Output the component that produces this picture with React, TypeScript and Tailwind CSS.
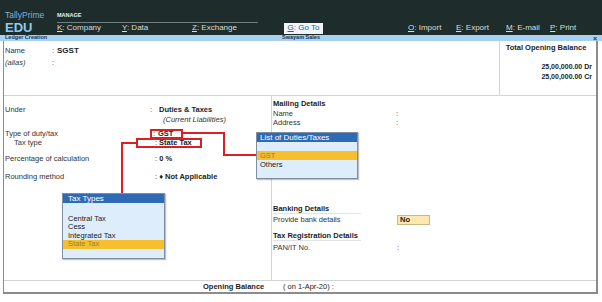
import React from "react";

const menu = [
  { key: "K", label: "Company", w: "w-[65px]" },
  { key: "Y", label: "Data", w: "w-[70px]" },
  { key: "Z", label: "Exchange", w: "w-[92px]" },
];

const rightMenu = [
  { key: "O", label: "Import", w: "w-[48px]" },
  { key: "E", label: "Export", w: "w-[50px]" },
  { key: "M", label: "E-mail", w: "w-[44px]" },
  { key: "P", label: "Print", w: "w-[40px]" },
];

function MenuItem({ k, label, w }: { k: string; label: string; w: string }) {
  return (
    <span className={`${w} text-[8px] text-[#d8dede]`}>
      <span className="underline">{k}</span>: {label}
    </span>
  );
}

function Row({ label, value, indent }: { label: string; value?: React.ReactNode; indent?: boolean }) {
  return (
    <div className="flex h-[9px] items-center">
      <span className={`w-[145px] ${indent ? "pl-[9px]" : ""}`}>{label}</span>
      {value}
    </div>
  );
}

export default function App() {
  return (
    <div
      className="relative h-[302px] w-[602px] overflow-hidden bg-white text-[7.5px] leading-none text-[#333]"
      style={{ fontFamily: '"Liberation Sans", Arial, sans-serif' }}
    >
      {/* top header */}
      <div className="flex h-[35px] bg-[#1e2c2c]">
        <div className="w-[57px] pl-[5px] pt-[11px]">
          <div className="text-[8.5px] text-[#7fb0da]">TallyPrime</div>
          <div className="mt-[1px] text-[13px] font-bold text-[#8ecbf0]">EDU</div>
        </div>
        <div className="flex-1">
          <div className="w-[201px] border-b border-[#6f7f7f] pb-[3px] pt-[13px] text-[5.5px] font-bold text-[#e8eeee]">
            MANAGE
          </div>
          <div className="flex h-[11px] items-center">
            {menu.map((m) => (
              <MenuItem key={m.key} k={m.key} label={m.label} w={m.w} />
            ))}
            <span className="w-[124px]">
              <span className="inline-flex h-[11px] w-[39px] items-center justify-center bg-[#eef4fa] text-[8px] text-[#2a5d9c]">
                <span className="underline">G</span>: Go To
              </span>
            </span>
            {rightMenu.map((m) => (
              <MenuItem key={m.key} k={m.key} label={m.label} w={m.w} />
            ))}
          </div>
        </div>
      </div>

      {/* title bar */}
      <div className="flex h-[6px] items-center bg-[#a8d1f0] px-[5px] text-[5.5px] font-bold text-[#1d3350]">
        <span className="flex-1">Ledger Creation</span>
        <span className="flex-1 text-center">Swayam Sales</span>
        <span className="flex-1 text-right text-[7px]">×</span>
      </div>

      {/* body */}
      <div className="ml-[3px] h-[253px] w-[595px] border-x border-b-2 border-r-2 border-[#8c8c8c]">
        {/* name area */}
        <div className="flex h-[55px] border-b border-[#d4d4d4]">
          <div className="flex-1 pl-[1px] pt-[5px]">
            <div className="flex h-[9px] items-center">
              <span className="w-[47px]">Name</span>
              <span className="w-[5px]">:</span>
              <span className="text-[8px] font-bold text-[#222]">SGST</span>
            </div>
            <div className="mt-[3px] flex h-[9px] items-center italic">
              <span className="w-[47px]">(alias)</span>
              <span className="not-italic">:</span>
            </div>
          </div>
          <div className="w-[97px] border-l border-[#d4d4d4] pr-[4px] pt-[3px] text-right font-bold text-[#222]">
            <div className="h-[10px] text-center text-[7.5px]">Total Opening Balance</div>
            <div className="mt-[9px] h-[10px] text-[7px]">25,00,000.00 Dr</div>
            <div className="h-[9px] text-[7px]">25,00,000.00 Cr</div>
          </div>
        </div>

        {/* details */}
        <div className="flex h-[184px]">
          <div className="w-[268px] border-r border-[#d4d4d4] pl-[1px] pt-[9px]">
            <div className="flex h-[10px] items-center">
              <span className="w-[145px]">Under</span>
              <span className="w-[9px]">:</span>
              <span className="font-bold text-[#222]">Duties &amp; Taxes</span>
            </div>
            <div className="flex h-[9px] items-center pl-[158px] italic">(Current Liabilities)</div>
            <div className="mt-[5px]">
              <Row
                label="Type of duty/tax"
                value={
                  <span className="flex h-[10px] w-[33px] items-center border-2 border-[#dc1f26] pl-[1px] font-bold text-[#222]">
                    <span className="w-[5px] font-normal">:</span>GST
                  </span>
                }
              />
              <Row
                label="Tax type"
                indent
                value={
                  <span className="-ml-[14px] flex h-[10px] w-[66px] items-center border-2 border-[#dc1f26] pl-[17px] font-bold text-[#222]">
                    <span className="w-[4px] font-normal">:</span>State Tax
                  </span>
                }
              />
            </div>
            <div className="mt-[7px]">
              <Row
                label="Percentage of calculation"
                value={
                  <span className="pl-[5px] font-bold text-[#222]">
                    <span className="font-normal">: </span>0 %
                  </span>
                }
              />
            </div>
            <div className="mt-[9px]">
              <Row
                label="Rounding method"
                value={
                  <span className="pl-[5px] font-bold text-[#222]">
                    <span className="font-normal">: </span>♦ Not Applicable
                  </span>
                }
              />
            </div>
          </div>

          <div className="flex-1 pl-[1px] pt-[3px]">
            <div className="flex h-[9px] items-center font-bold text-[#222]">Mailing Details</div>
            <div className="mt-[1px] flex h-[9px] items-center">
              <span className="w-[123px]">Name</span>:
            </div>
            <div className="flex h-[9px] items-center">
              <span className="w-[123px]">Address</span>:
            </div>

            <div className="mt-[78px] flex h-[9px] w-[88px] items-center whitespace-nowrap border-b border-[#e2e2e2] font-bold text-[#222]">
              Banking Details
            </div>
            <div className="flex h-[11px] items-center">
              <span className="w-[124px]">Provide bank details</span>
              <span className="flex h-[10px] w-[33px] items-center border border-[#c9b98a] bg-[#fde8b0] pl-[2px] font-bold text-[#222]">
                No
              </span>
            </div>
            <div className="mt-[6px] flex h-[10px] w-[88px] items-center whitespace-nowrap border-b border-[#e2e2e2] font-bold text-[#222]">
              Tax Registration Details
            </div>
            <div className="mt-[2px] flex h-[9px] items-center">
              <span className="w-[124px]">PAN/IT No.</span>:
            </div>
          </div>
        </div>

        {/* opening balance */}
        <div className="flex h-[13px] items-center border-t border-[#d4d4d4] pl-[199px] text-[#222]">
          <span className="w-[80px] font-bold">Opening Balance</span>
          <span>( on 1-Apr-20) :</span>
        </div>
      </div>

      {/* connector lines */}
      <svg className="pointer-events-none absolute left-0 top-0" width="602" height="302">
        <polyline points="183,133 224,133 224,155 256,155" fill="none" stroke="#dc1f26" strokeWidth="2" />
        <polyline points="136,143 122,143 122,193" fill="none" stroke="#dc1f26" strokeWidth="2" />
      </svg>

      {/* list of duties popup */}
      <div className="absolute left-[256px] top-[132px] h-[47px] w-[102px] border border-[#7f8ea3] bg-[#ddedfb] shadow-[1px_1px_1px_rgba(0,0,0,0.25)]">
        <div className="flex h-[9px] items-center bg-[#2f6bb5] pl-[3px] text-[8px] text-white">List of Duties/Taxes</div>
        <div className="mt-[9px] flex h-[9px] items-center bg-[#f6bf2d] pl-[3px] text-[#9c7c3c]">GST</div>
        <div className="flex h-[9px] items-center pl-[3px] text-[#222]">Others</div>
      </div>

      {/* tax types popup */}
      <div className="absolute left-[62px] top-[193px] h-[66px] w-[103px] border border-[#7f8ea3] bg-[#ddedfb] shadow-[1px_1px_1px_rgba(0,0,0,0.25)]">
        <div className="flex h-[9px] items-center bg-[#2f6bb5] pl-[5px] text-[8px] text-white">Tax Types</div>
        <div className="mt-[11px] flex h-[8.5px] items-center pl-[5px] text-[#222]">Central Tax</div>
        <div className="flex h-[8.5px] items-center pl-[5px] text-[#222]">Cess</div>
        <div className="flex h-[8.5px] items-center pl-[5px] text-[#222]">Integrated Tax</div>
        <div className="flex h-[9px] items-center bg-[#f6bf2d] pl-[5px] text-[#9c7c3c]">State Tax</div>
      </div>
    </div>
  );
}
